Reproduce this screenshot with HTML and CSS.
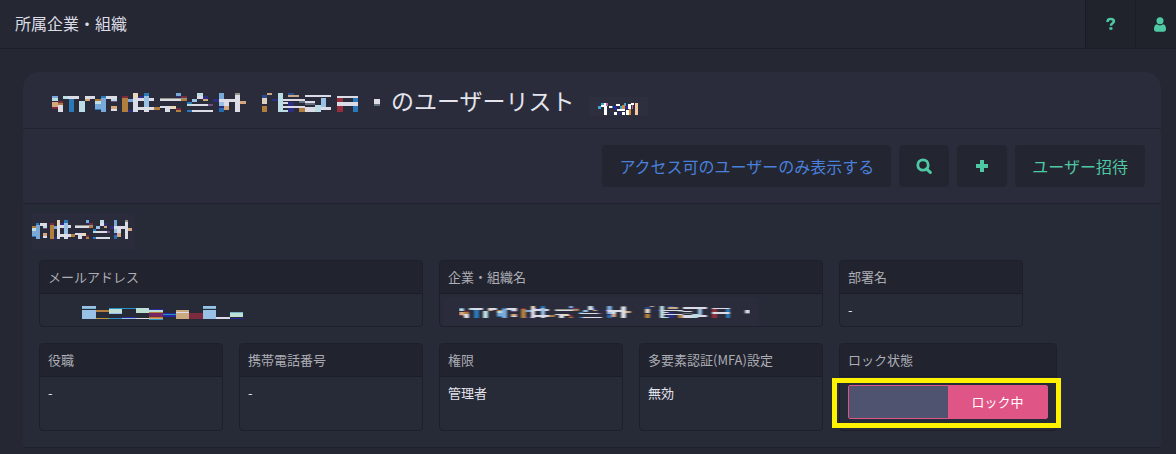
FILE: index.html
```html
<!DOCTYPE html>
<html lang="ja">
<head>
  <meta charset="UTF-8">
  <meta name="viewport" content="width=device-width, initial-scale=1.0">
  <title>所属企業・組織</title>
  <link rel="stylesheet" href="styles.css">
</head>
<body>
  <!-- mosaics over private names -->
  <svg class="defs" aria-hidden="true">
    <defs>
      <filter id="soften" x="0" y="0" width="1" height="1"><feGaussianBlur stdDeviation="1 0"/></filter>
      <g id="mosaic-company" shape-rendering="crispEdges">
        <path fill="#dcdce6" d="M174 315h15v21h-15zM189 288h48v9h-48zM255 288h30v8h-30zM319 289h32v7h-32zM333 327h18v6h-18zM399 295h63v9h-63zM399 321h63v9h-63zM399 304h15v32h-15zM432 318h15v18h-15zM480 297h81v6h-81zM480 318h48v6h-48zM495 324h15v12h-15zM591 287h18v9h-18zM576 312h49v6h-49zM576 330h63v6h-63zM657 297h63v9h-63zM672 297h15v21h-15zM705 279h15v57h-15z"/>
        <path fill="#78a9d8" d="M156 288h18v6h-18zM303 294h16v42h-16zM285 312h18v18h-18zM384 297h15v9h-15zM528 279h15v9h-15zM657 279h15v18h-15z"/>
        <path fill="#2a79b9" d="M207 297h15v39h-15zM303 288h15v6h-15zM561 330h15v6h-15zM561 306h15v6h-15zM432 279h15v9h-15zM285 327h18v4h-18z"/>
        <path fill="#bcdde4" d="M156 294h18v9h-18zM237 303h18v33h-18zM189 288h15v9h-15zM285 304h18v8h-18zM333 297h18v6h-18zM561 312h15v6h-15zM591 279h18v8h-18z"/>
        <path fill="#98c1e5" d="M432 288h15v33h-15zM576 296h15v10h-15zM657 306h15v12h-15z"/>
        <path fill="#b17e3e" d="M366 294h18v42h-18zM174 309h15v6h-15zM285 297h18v7h-18zM462 321h18v9h-18zM528 330h15v6h-15zM543 296h18v7h-18z"/>
        <path fill="#d4a77d" d="M156 306h18v15h-18zM255 297h15v6h-15zM333 318h18v9h-18zM609 296h15v8h-15zM672 318h15v12h-15zM720 303h18v9h-18z"/>
        <path fill="#7b2b3d" d="M156 321h18v6h-18zM174 303h15v6h-15zM366 288h18v6h-18zM528 324h15v6h-15zM543 288h18v8h-18z"/>
        <path fill="#2c2d83" d="M414 288h18v7h-18zM384 330h15v6h-15zM528 288h15v4h-15zM609 289h15v7h-15zM639 297h18v8h-18zM657 318h15v6h-15z"/>
        <path fill="#ead7b9" d="M399 279h15v16h-15zM510 318h18v9h-18z"/>
        <path fill="#714c82" d="M625 312h14v6h-14zM333 303h18v3h-18z"/>
        <path fill="#929487" d="M705 279h15v7h-15zM480 294h81v3h-81z"/>
        <path fill="#276bb0" d="M657 324h15v12h-15z"/>
      </g>
      <g id="mosaic-label" shape-rendering="crispEdges">
        <path fill="#c8a98a" d="M801 279h15v7h-15zM864 285h33v6h-33z"/>
        <path fill="#2a4c91" d="M786 286h15v9h-15zM864 279h18v6h-18z"/>
        <path fill="#ddd0bd" d="M786 295h15v18h-15z"/>
        <path fill="#b17e3e" d="M786 318h15v18h-15zM897 318h18v18h-18z"/>
        <path fill="#b9dce5" d="M834 279h15v57h-15zM849 330h15v6h-15zM945 315h18v21h-18z"/>
        <path fill="#98c1e5" d="M963 294h15v36h-15z"/>
        <path fill="#2c2d83" d="M816 297h18v6h-18zM864 306h18v30h-18z"/>
        <path fill="#dcdce6" d="M849 296h66v7h-66zM849 306h15v6h-15zM849 318h66v5h-66zM915 285h78v7h-78zM915 303h30v5h-30zM915 322h30v14h-30zM963 322h30v8h-30zM1011 288h63v6h-63zM1011 306h63v12h-63zM1122 297h18v15h-18z"/>
        <path fill="#62717d" d="M897 303h18v6h-18zM915 310h30v6h-30zM1122 312h18v6h-18z"/>
        <path fill="#982d3b" d="M1011 294h18v12h-18zM1011 318h18v18h-18z"/>
        <path fill="#2a79b9" d="M1059 294h15v12h-15zM1059 318h15v18h-15z"/>
      </g>
      <symbol id="mosaic-full" viewBox="156 279 984 57" preserveAspectRatio="none">
        <use href="#mosaic-company"/>
        <use href="#mosaic-label"/>
      </symbol>
      <symbol id="mosaic-name" viewBox="285 279 453 57" preserveAspectRatio="none">
        <use href="#mosaic-company"/>
      </symbol>
    </defs>
  </svg>

  <header class="topbar">
    <h1 class="topbar-title">所属企業・組織</h1>
    <nav class="topbar-nav">
      <a class="topbar-link" href="#help" aria-label="ヘルプ">
        <svg width="12" height="14" viewBox="0 0 12 14" fill="none" stroke="#4fc9a4">
          <path d="M2.6 5C2.4 2.6 4 2 5.6 2c2 0 3.3.9 3.3 2.3 0 2-3 1.9-3 4.4" stroke-width="2.6"/>
          <path d="M4.4 11.5h3" stroke-width="2.6"/>
        </svg>
      </a>
      <a class="topbar-link" href="#account" aria-label="アカウント">
        <svg width="12" height="15" viewBox="0 0 12 15" fill="#4fc9a4">
          <circle cx="6" cy="3.8" r="3.5"/>
          <path d="M3 7.3c1.8 1.5 4.2 1.5 6 0 2.3.4 3 2.6 3 4.8 0 1.6-.8 2.6-2.4 2.6H2.4C.8 14.700 0 13.700 0 12.100c0-2.200.7-4.400 3-4.800z"/>
        </svg>
      </a>
    </nav>
  </header>

  <main class="panel">
    <div class="panel-header">
      <svg class="mosaic-heading" role="img" aria-label="企業名"><use href="#mosaic-full"/></svg>
      <h2 class="panel-title">のユーザーリスト</h2>
      <span class="tag">
        <svg width="42" height="13" viewBox="1042 98 126 39" shape-rendering="crispEdges" aria-hidden="true">
          <path fill="#fff" d="M1053 103h9v6h-9zM1062 99h9v36h-9zM1077 108h9v6h-9zM1098 102h12v6h-12zM1092 126h9v9h-9zM1101 117h24v6h-24zM1116 126h9v9h-9zM1134 102h9v15h-9zM1128 120h9v15h-9zM1143 99h9v6h-9z"/>
          <path fill="#38a7df" d="M1044 108h9v9h-9zM1053 99h9v4h-9zM1086 108h3v6h-3zM1110 108h6v9h-6zM1122 99h6v9h-6z"/>
          <path fill="#2929a0" d="M1092 108h9v12h-9zM1125 108h9v9h-9zM1107 126h6v6h-6z"/>
          <path fill="#d58a36" d="M1116 105h9v12h-9zM1137 117h6v18h-6z"/>
          <path fill="#f3c99d" d="M1155 99h9v36h-9z"/>
          <path fill="#c06aa0" d="M1068 99h6v7h-6zM1146 105h3v12h-3z"/>
        </svg>
      </span>
    </div>

    <div class="toolbar">
      <button class="btn btn-blue" type="button">アクセス可のユーザーのみ表示する</button>
      <button class="btn btn-icon" type="button" aria-label="検索">
        <svg width="16" height="16" viewBox="0 0 16 16" fill="none" stroke="#4fc9a4">
          <circle cx="7" cy="7" r="5.2" stroke-width="2.8"/>
          <path d="M10.5 10.8l3.8 3.6" stroke-width="3" stroke-linecap="round"/>
        </svg>
      </button>
      <button class="btn btn-icon" type="button" aria-label="追加">
        <svg width="14" height="14" viewBox="0 0 14 14" fill="#4fc9a4">
          <path d="M5 1h4v4h4v4H9v4H5V9H1V5h4z"/>
        </svg>
      </button>
      <button class="btn" type="button">ユーザー招待</button>
    </div>

    <section class="user">
      <h3 class="user-name">
        <svg class="mosaic-user" role="img" aria-label="ユーザー名"><use href="#mosaic-name"/></svg>
      </h3>

      <dl class="fields">
        <div class="field field-wide">
          <dt>メールアドレス</dt>
          <dd class="masked-mail">
            <svg width="161" height="14" viewBox="186 318 483 42" shape-rendering="crispEdges" role="img" aria-label="メールアドレス">
              <path fill="#98c1e5" d="M186 318h42v6h-42zM186 330h42v27h-42zM549 318h39v6h-39zM549 330h39v27h-39zM267 339h39v3h-39zM306 354h42v3h-42z"/>
              <path fill="#78b3cc" d="M186 324h42v3h-42zM549 324h39v3h-39zM630 336h39v3h-39z"/>
              <path fill="#bedfd5" d="M267 327h39v12h-39zM348 324h39v15h-39zM387 330h42v6h-42zM630 339h39v12h-39z"/>
              <path fill="#b17e3e" d="M228 330h39v6h-39zM387 336h42v3h-42zM387 351h42v3h-42z"/>
              <path fill="#bb963d" d="M228 354h39v3h-39z"/>
              <path fill="#2a91c4" d="M267 324h81v3h-81zM267 354h39v3h-39zM387 357h42v3h-42zM429 342h39v3h-39z"/>
              <path fill="#29299d" d="M306 351h42v3h-42zM387 327h42v3h-42zM429 339h39v3h-39zM429 345h39v6h-39zM630 354h39v3h-39z"/>
              <path fill="#752568" d="M387 339h42v9h-42z"/>
              <path fill="#7b2b3d" d="M387 348h42v3h-42zM507 339h42v18h-42z"/>
              <path fill="#dcdce6" d="M348 354h39v3h-39zM468 336h39v3h-39zM588 351h42v6h-42z"/>
              <path fill="#ccaa81" d="M468 330h39v6h-39zM468 339h39v18h-39zM387 354h42v3h-42z"/>
            </svg>
          </dd>
        </div>
        <div class="field field-wide">
          <dt>企業・組織名</dt>
          <dd class="masked-org">
            <svg class="mosaic-org" role="img" aria-label="企業名"><use href="#mosaic-full" filter="url(#soften)"/></svg>
          </dd>
        </div>
        <div class="field">
          <dt>部署名</dt>
          <dd>-</dd>
        </div>
      </dl>

      <dl class="fields">
        <div class="field">
          <dt>役職</dt>
          <dd>-</dd>
        </div>
        <div class="field">
          <dt>携帯電話番号</dt>
          <dd>-</dd>
        </div>
        <div class="field">
          <dt>権限</dt>
          <dd>管理者</dd>
        </div>
        <div class="field">
          <dt>多要素認証(MFA)設定</dt>
          <dd>無効</dd>
        </div>
        <div class="field field-lock">
          <dt id="lock-label">ロック状態</dt>
          <dd>
            <label class="switch">
              <input type="checkbox" role="switch" aria-labelledby="lock-label" checked>
              <span class="switch-off"></span>
              <span class="switch-on">ロック中</span>
            </label>
            <span class="highlight"></span>
          </dd>
        </div>
      </dl>
    </section>
  </main>
</body>
</html>
```
FILE: styles.css
```css
* {
  box-sizing: border-box;
}
body {
  margin: 0;
  font-family: "Noto Sans CJK JP", sans-serif;
  font-size: 13px;
  line-height: 20px;
  color: #e4e4ec;
  background-color: #252733;
  min-height: 100vh;
}
h1, h2, h3, dl, dd {
  margin: 0;
}
svg {
  display: block;
}
.defs {
  position: absolute;
  width: 0;
  height: 0;
}

/* top bar */
.topbar {
  display: flex;
  justify-content: space-between;
  border-bottom: 1px solid #1c1e29;
}
.topbar-title {
  padding: 11px 15px 13px;
  font-size: 16px;
  line-height: 24px;
  font-weight: 400;
  color: #dcdce6;
}
.topbar-nav {
  display: flex;
}
.topbar-link {
  display: flex;
  align-items: center;
  justify-content: center;
  width: 50px;
  background-color: #20222c;
  border-left: 1px solid #1a1c25;
}
.topbar-link:last-child {
  width: 41px;
  padding-left: 8px;
}

/* panel */
.panel {
  margin: 23px 15px 0 23px;
  background-color: #2a2c3c;
  border-radius: 16px 16px 0 0;
}
.panel-header {
  display: flex;
  align-items: center;
  height: 57px;
  padding-left: 29px;
  border-bottom: 1px solid #20222d;
}
.mosaic-heading {
  width: 328px;
  height: 19px;
  margin-top: 5px;
}
.panel-title {
  margin-left: 11px;
  font-size: 23px;
  line-height: 32px;
  font-weight: 400;
}
.tag {
  align-self: flex-end;
  width: 59px;
  margin: 0 0 12px 14px;
  padding: 6px 0 0 8px;
  background-color: #2d2f3e;
}
.toolbar {
  display: flex;
  justify-content: flex-end;
  gap: 8px;
  padding: 16px;
  border-bottom: 1px solid #20222d;
}
.btn {
  display: flex;
  align-items: center;
  justify-content: center;
  height: 42px;
  padding: 0 17px;
  border: 0;
  border-radius: 4px;
  background-color: #232631;
  color: #4fc9a4;
  font-family: inherit;
  font-size: 16px;
  cursor: pointer;
}
.btn-blue {
  color: #4a80dc;
}
.btn-icon {
  width: 50px;
}

/* user */
.user {
  display: flex;
  flex-direction: column;
  gap: 16px;
  padding-bottom: 16px;
  background-color: #272a37;
  border-bottom: 1px solid #1e202b;
}
.user-name {
  width: 103px;
  height: 37px;
  margin: 9px 0 -6px 9px;
  padding-top: 7px;
  background-color: #2a2c3b;
}
.mosaic-user {
  width: 100px;
  height: 19px;
}
.fields {
  display: flex;
  gap: 16px;
  padding: 0 16px;
}
.field {
  width: 184px;
  border: 1px solid #1d1f2a;
  border-radius: 4px;
}
.field-wide {
  width: 384px;
}
.field dt {
  padding: 6px 8px;
  background-color: #21232e;
  border-bottom: 1px solid #1b1d27;
  border-radius: 3px 3px 0 0;
  color: #acadb5;
}
.field dd {
  padding: 6px 8px;
}
.field .masked-mail {
  padding: 12px 42px 6px;
}
.field .masked-org {
  width: 316px;
  height: 28px;
  margin: 4px 3px 0;
  padding: 8px 16px;
  background-color: #2a2c3b;
}
.mosaic-org {
  width: 291px;
  height: 12px;
}
.field-lock {
  position: relative;
  width: 218px;
}
.field-lock dd {
  padding: 8px 8px 11px;
}

/* lock switch */
.switch {
  display: flex;
  height: 34px;
  border: 1px solid #df5586;
  border-radius: 2px;
  line-height: 32px;
  text-align: center;
  color: #fff;
  cursor: pointer;
}
.switch input {
  position: absolute;
  opacity: 0;
}
.switch-off,
.switch-on {
  flex: 1;
}
.switch-off {
  background-color: #50536f;
}
.switch-on {
  background-color: #df5586;
}
.highlight {
  position: absolute;
  top: 34px;
  left: -8px;
  right: -5px;
  height: 50px;
  border: 5px solid #fff200;
  pointer-events: none;
}
```
